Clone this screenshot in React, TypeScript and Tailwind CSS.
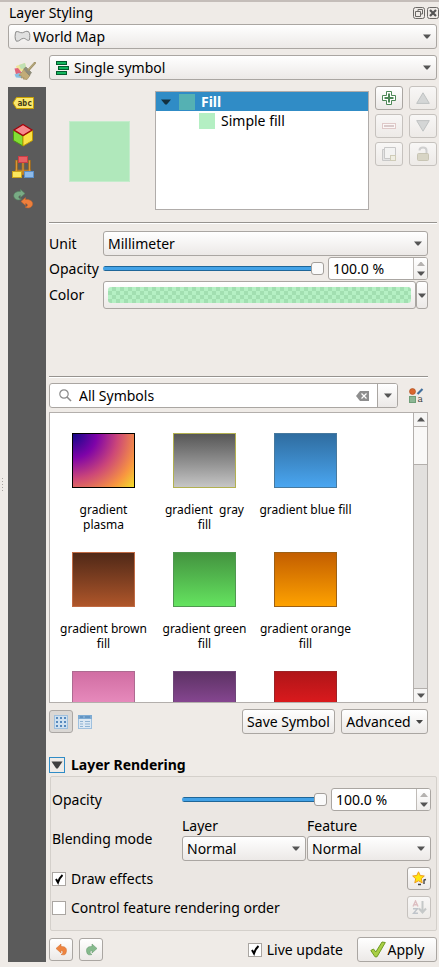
import type { ReactNode } from 'react';

const button =
  'flex items-center justify-center rounded-[3px] border border-[#aaa6a2] bg-linear-to-b from-white to-[#ece9e7]';
const fadedButton =
  'flex items-center justify-center rounded-[3px] border border-[#c6c2be] bg-linear-to-b from-[#f8f7f6] to-[#edeae7]';

function Down({ className = '' }: { className?: string }) {
  return (
    <svg viewBox="0 0 8 5" className={`h-[5px] w-2 shrink-0 ${className}`} aria-hidden="true">
      <path d="M0 0.5H8L4.6 4.5H3.4Z" fill="#555" />
    </svg>
  );
}

function Combo({
  label,
  value,
  icon,
  id,
  className = '',
}: {
  label: string;
  value: string;
  icon?: ReactNode;
  id?: string;
  className?: string;
}) {
  return (
    <div className={`relative min-w-0 ${className}`}>
      <select
        id={id}
        aria-label={label}
        className={`block h-[25px] w-full appearance-none rounded-[3px] border border-[#aaa6a2] bg-linear-to-b from-white to-[#ece9e7] pr-5 outline-none ${icon ? 'pl-6' : 'pl-1'}`}
      >
        <option>{value}</option>
      </select>
      {icon && <span className="pointer-events-none absolute inset-y-0 left-1.5 flex items-center">{icon}</span>}
      <span className="pointer-events-none absolute inset-y-0 right-1.5 flex items-center">
        <Down />
      </span>
    </div>
  );
}

function Slider({ label }: { label: string }) {
  return (
    <input
      type="range"
      aria-label={label}
      min={0}
      max={100}
      defaultValue={100}
      className="h-[13px] min-w-0 flex-1 appearance-none bg-transparent [&::-webkit-slider-runnable-track]:h-[5px] [&::-webkit-slider-runnable-track]:rounded-sm [&::-webkit-slider-runnable-track]:bg-[linear-gradient(#1f6698_1px,#43a2e6_1px,#43a2e6_4px,#1f6698_4px)] [&::-webkit-slider-thumb]:-mt-1 [&::-webkit-slider-thumb]:size-[13px] [&::-webkit-slider-thumb]:appearance-none [&::-webkit-slider-thumb]:rounded-[3px] [&::-webkit-slider-thumb]:border [&::-webkit-slider-thumb]:border-[#a39f9b] [&::-webkit-slider-thumb]:bg-[#fafafa]"
    />
  );
}

function Spin({ label }: { label: string }) {
  return (
    <div className="flex h-[23px] w-[100px] shrink-0 overflow-hidden rounded-[3px] border border-[#aaa6a2] bg-white">
      <input aria-label={label} defaultValue="100.0 %" className="w-0 min-w-0 flex-1 bg-transparent pl-1 outline-none" />
      <div className="flex w-[14px] flex-col border-l border-[#c0bcb8] bg-linear-to-b from-white to-[#efedeb]">
        <button aria-label="Increase" className="flex flex-1 items-end justify-center pb-[3px]">
          <svg viewBox="0 0 8 4" className="h-1 w-2 shrink-0">
            <path d="M0 4H8L4.6 0H3.4Z" fill="#b5b2b0" />
          </svg>
        </button>
        <button aria-label="Decrease" className="flex flex-1 items-start justify-center pt-0.5">
          <Down />
        </button>
      </div>
    </div>
  );
}

function Check({ label, checked }: { label: string; checked: boolean }) {
  return (
    <label className="flex items-center gap-[5px]">
      <span className="relative size-[14px]">
        <input
          type="checkbox"
          defaultChecked={checked}
          className="peer block size-[14px] appearance-none border border-[#aaa6a2] bg-white"
        />
        <svg
          viewBox="0 0 14 14"
          className="pointer-events-none absolute inset-0 hidden size-[14px] peer-checked:block"
          aria-hidden="true"
        >
          <path d="M4 7L6 10.5C7 7.500 8.500 4.800 10.500 3" fill="none" stroke="#000" strokeWidth="2" />
        </svg>
      </span>
      {label}
    </label>
  );
}

function Brush() {
  return (
    <svg viewBox="0 0 22 18" className="h-[18px] w-[22px]">
      <path d="M2 4L11 1L13 8L4 10Z" fill="#efe59a" />
      <path d="M5 3L11 1L12 6L7 7Z" fill="#bfe0b4" />
      <path d="M0.500 6.500L4 6L8 11L2 12.500Z" fill="#e0647a" />
      <path d="M0.500 12.500L5 11L9 16L2 15.500Z" fill="#86c0e4" />
      <path d="M5 13.500L9.500 8L16 13.500L13 17.500L9 17L10 15.500L7 16L8 14Z" fill="#c2ac78" stroke="#9c8758" strokeWidth="0.600" />
      <path d="M9.500 7L12 5L17.500 10.500L15.500 13.500Z" fill="#8f8d7c" stroke="#77745f" strokeWidth="0.500" />
      <path d="M14.500 8L20.800 1" stroke="#a2946a" strokeWidth="2.400" strokeLinecap="round" />
      <path d="M14.500 7.400L20.400 1" stroke="#c6b98c" strokeWidth="0.800" />
    </svg>
  );
}

function LabelTag() {
  return (
    <svg viewBox="0 0 22 22" className="size-[22px]">
      <path d="M1 11L4.500 5.500H21.500V16.500H4.500Z" fill="#fbe86f" stroke="#c9a100" />
      <text x="5.500" y="14" fontSize="8" fontWeight="700" fill="#3d3713" fontFamily="DejaVu Sans Mono, monospace">
        abc
      </text>
    </svg>
  );
}

function Cube() {
  return (
    <svg viewBox="0 0 22 24" className="h-6 w-[22px]">
      <path d="M1.500 7.500L11 13V23L1.500 17.500Z" fill="#84df35" stroke="#4d9a0e" />
      <path d="M20.500 7.500L11 13V23L20.500 17.500Z" fill="#fbe146" stroke="#c19b00" />
      <path d="M11 1.500L20 7L11 12.500L2 7Z" fill="#f68a8d" stroke="#a50008" strokeWidth="1.200" />
    </svg>
  );
}

function Diagram() {
  return (
    <svg viewBox="0 0 22 22" className="size-[22px]">
      <path d="M4.500 16V4M17.500 4V16M11 6V19" fill="none" stroke="#a66d1c" strokeWidth="2.600" />
      <path d="M3 14.500H19" stroke="#b87b25" strokeWidth="1.600" />
      <path d="M4.500 15V4.500M17.500 4.500V15M11 6V18.500" fill="none" stroke="#d79638" strokeWidth="1" />
      <rect x="6.500" y="0.500" width="9" height="6" fill="#e96064" stroke="#cb3e45" />
      <rect x="0.500" y="15.500" width="9" height="6" fill="#fce85e" stroke="#cda51a" />
      <rect x="12.500" y="15.500" width="9" height="6" fill="#8ebbea" stroke="#5b8fc9" />
    </svg>
  );
}

const hook = 'M1 5.500L6 1V3.500C10.500 3 13 6 10.500 11C9.500 12 8 12 6 11.500C8.500 10.500 8.500 7.500 6 7.500V10Z';

function History() {
  return (
    <svg viewBox="0 0 22 20" className="h-5 w-[22px]">
      <path
        d="M13 4.500L8.500 0.500V2.500C4 2 1 4.500 2 8C3.500 11.500 7 11.500 9.500 10C6.500 10 5.500 7 8.500 6.500V8.500Z"
        fill="#79ab85"
        stroke="#548961"
        strokeWidth="0.500"
      />
      <path
        d="M9 12.500L13.500 8.500V10.500C18 10 21.500 12.500 20.500 16C19 19.500 15.500 19.500 13 18C16 18 16.500 15 13.500 14.500V16.500Z"
        fill="#ed7f3c"
        stroke="#c76329"
        strokeWidth="0.500"
      />
    </svg>
  );
}

const tabs: [string, () => ReactNode][] = [
  ['Labels', LabelTag],
  ['3D view', Cube],
  ['Diagrams', Diagram],
  ['History', History],
];

type Swatch = { caption?: string; edge: string; fill: string };

const symbols: Swatch[] = [
  {
    caption: 'gradient\nplasma',
    edge: 'border-black',
    fill: 'bg-[radial-gradient(circle_at_0_0,#0d0887_0%,#7e03a8_30%,#cc4778_55%,#f89540_80%,#f0f921_105%)]',
  },
  { caption: 'gradient  gray\nfill', edge: 'border-[#b2b050]', fill: 'bg-linear-to-b from-[#555] to-[#c8c8c8]' },
  { caption: 'gradient blue fill', edge: 'border-[#47799e]', fill: 'bg-linear-to-b from-[#2f6c9f] to-[#4aa7f2]' },
  { caption: 'gradient brown\nfill', edge: 'border-[#c06a43]', fill: 'bg-linear-to-b from-[#4f2817] to-[#b1572a]' },
  { caption: 'gradient green\nfill', edge: 'border-[#4f9850]', fill: 'bg-linear-to-b from-[#43923f] to-[#65e560]' },
  { caption: 'gradient orange\nfill', edge: 'border-[#9d6014]', fill: 'bg-linear-to-b from-[#c25d00] to-[#ffa300]' },
  { edge: 'border-[#ad6b91]', fill: 'bg-linear-to-b from-[#d06da2] to-[#f79fcf]' },
  { edge: 'border-[#6e4678]', fill: 'bg-linear-to-b from-[#5c3263] to-[#a656b4]' },
  { edge: 'border-[#9c2226]', fill: 'bg-linear-to-b from-[#af1518] to-[#fb1d20]' },
];

function Rule() {
  return <div className="h-0.5 border-t border-[#96938f] bg-white" />;
}

function SymbolTree() {
  return (
    <section className="flex h-[142px] pt-1.5">
      <div className="flex min-w-0 flex-1 gap-1.5">
        <div className="flex w-[101px] justify-center pt-[35px]">
          <div className="size-[61px] border border-[#c4eccc] bg-[#b0e8bb]" />
        </div>
        <ul role="tree" className="mt-[5px] -ml-px h-[119px] min-w-0 flex-1 border border-[#b0acaa] bg-white">
          <li role="treeitem" aria-selected="true" className="flex h-[19px] items-center bg-[#308cc6] pl-[5px] font-bold text-white">
            <svg viewBox="0 0 10 6" className="h-1.5 w-2.5">
              <path d="M0 0.500H10L5.800 5.500H4.200Z" fill="#13303f" />
            </svg>
            <span className="mr-1.5 ml-2 size-4 bg-[#55b1b3]" />
            Fill
          </li>
          <li role="treeitem" className="flex h-5 items-center pl-[43px]">
            <span className="mr-1.5 size-4 bg-[#b4efc3]" />
            Simple fill
          </li>
        </ul>
      </div>
      <div className="ml-1.5 grid w-[62px] auto-rows-[24px] grid-cols-2 gap-x-1.5 gap-y-1">
        <button aria-label="Add symbol layer" className={button}>
          <svg viewBox="0 0 14 14" className="size-[14px]">
            <path d="M4.500 0.500H9.500V4.500H13.500V9.500H9.500V13.500H4.500V9.500H0.500V4.500H4.500Z" fill="#fff" stroke="#4d8757" />
            <path d="M7 2.500V11.500M2.500 7H11.500" stroke="#4d8757" strokeWidth="2" />
          </svg>
        </button>
        <button aria-label="Move up" className={fadedButton}>
          <svg viewBox="0 0 14 12" className="h-3 w-[14px]">
            <path d="M7 0.800L13.300 11.400H0.700Z" fill="#d4d6d6" stroke="#bfc2c2" />
          </svg>
        </button>
        <button aria-label="Remove symbol layer" className={fadedButton}>
          <svg viewBox="0 0 14 6" className="h-1.5 w-[14px]">
            <rect x="0.500" y="0.500" width="13" height="5" fill="#fbf7f6" stroke="#dfc9c8" />
            <path d="M2 3H12" stroke="#d9caca" strokeWidth="2" />
          </svg>
        </button>
        <button aria-label="Move down" className={fadedButton}>
          <svg viewBox="0 0 14 12" className="h-3 w-[14px]">
            <path d="M0.700 0.600H13.300L7 11.200Z" fill="#d4d6d6" stroke="#bfc2c2" />
          </svg>
        </button>
        <button aria-label="Duplicate" className={fadedButton}>
          <svg viewBox="0 0 14 14" className="size-[14px]">
            <path d="M2.500 2.500H0.500V13.500H9.500V11.500" fill="#e4e4e4" stroke="#c8c8c8" />
            <path d="M2.500 0.500H13.500V11.500H2.500Z" fill="#f3f3f2" stroke="#c8c8c8" />
            <rect x="8.500" y="8.500" width="5" height="5" fill="#efeee2" stroke="#cfccb8" />
          </svg>
        </button>
        <button aria-label="Lock colour" className={fadedButton}>
          <svg viewBox="0 0 12 16" className="h-4 w-3">
            <path d="M2.500 4.500C2.500 0.500 9.500 0.500 9.500 4.500V8" fill="none" stroke="#cfcfcf" strokeWidth="2" />
            <rect x="0.500" y="7.500" width="11" height="7" rx="1" fill="#d8d5c5" stroke="#c8c5b4" />
          </svg>
        </button>
      </div>
    </section>
  );
}

function SymbolList() {
  return (
    <div className="flex h-[291px] border border-[#b3afac] bg-white">
      <ul className="grid min-w-0 flex-1 auto-rows-[119px] grid-cols-[repeat(3,101px)] overflow-hidden pt-5 pl-[3px]">
        {symbols.map(({ caption, edge, fill }) => (
          <li key={fill} className="flex flex-col items-center gap-[14px]">
            <div className={`h-[55px] w-[63px] shrink-0 border bg-origin-border ${edge} ${fill}`} />
            {caption && <span className="text-center text-[12px] leading-[15px] whitespace-pre">{caption}</span>}
          </li>
        ))}
      </ul>
      <div className="flex w-[14px] flex-col border-l border-[#b3afac] bg-[#e2e0de]">
        <button aria-label="Scroll up" className="flex h-[14px] items-center justify-center border-b border-[#b3afac] bg-[#f6f5f4]">
          <svg viewBox="0 0 8 5" className="h-[5px] w-2">
            <path d="M0 4.500H8L4.600 0.500H3.400Z" fill="#555" />
          </svg>
        </button>
        <div className="h-[38px] border-b border-[#b3afac] bg-[#f9f8f7]" />
        <div className="flex-1" />
        <button aria-label="Scroll down" className="flex h-[14px] items-center justify-center border-t border-[#b3afac] bg-[#f6f5f4]">
          <Down />
        </button>
      </div>
    </div>
  );
}

export default function App() {
  return (
    <div className="flex border-t-2 border-[#c4bdb9] bg-[#efebe7] font-['Noto_Sans',sans-serif] text-[14px] leading-[20px] text-black">
      <div className="flex w-2 shrink-0 flex-col items-start justify-center gap-0.5 pl-0.5">
        {[0, 1, 2, 3, 4].map((n) => (
          <span key={n} className="h-px w-px bg-[#a9a5a1]" />
        ))}
      </div>
      <div className="flex min-w-0 flex-1 flex-col pb-[5px]">
        <header className="flex h-[22px] items-center justify-between">
          <h1 className="pl-px">Layer Styling</h1>
          <div className="flex gap-0.5">
            <button aria-label="Float panel">
              <svg viewBox="0 0 12 12" className="size-3">
                <rect x="0.500" y="0.500" width="11" height="11" rx="2" fill="none" stroke="#6b6966" />
                <path d="M5 4.500V2.500H9.500V7H7.500M2.500 4.500H7.500V9.500H2.500Z" fill="none" stroke="#6b6966" />
              </svg>
            </button>
            <button aria-label="Close panel">
              <svg viewBox="0 0 12 12" className="size-3">
                <rect x="0.500" y="0.500" width="11" height="11" rx="2" fill="none" stroke="#6b6966" />
                <path d="M3 3L9 9M9 3L3 9" stroke="#555" strokeWidth="2.200" />
              </svg>
            </button>
          </div>
        </header>
        <Combo
          label="Layer"
          value="World Map"
          className="mr-0.5"
          icon={
            <svg viewBox="0 0 18 13" className="h-[13px] w-[17px]">
              <path
                d="M2 1.500C5 0.500 6 3 9 2.500C11 2 13 0 15.500 1.500C17.500 4 16.500 7 16.500 10C14 12 12.500 8 10 8.500C7 8.500 6 12 2.500 11.500C0.500 9 1 4 2 1.500Z"
                fill="#e0e0e0"
                stroke="#858585"
              />
            </svg>
          }
        />
        <div className="mt-1.5 flex gap-[3px] pr-0.5">
          <nav className="flex w-[38px] shrink-0 flex-col">
            <button aria-label="Symbology" className="flex h-8 items-center pl-1.5">
              <Brush />
            </button>
            <div className="flex flex-1 flex-col bg-[#5b5b5b]">
              {tabs.map(([name, Icon]) => (
                <button key={name} aria-label={name} className="flex h-8 items-center pl-1">
                  <Icon />
                </button>
              ))}
            </div>
          </nav>
          <main className="flex min-w-0 flex-1 flex-col">
            <Combo
              label="Renderer"
              value="Single symbol"
              icon={
                <svg viewBox="0 0 14 14" className="size-[14px]">
                  <g fill="#14b55e" stroke="#065a2e">
                    <rect x="1.500" y="0.500" width="10" height="3" />
                    <rect x="3.500" y="5.500" width="10" height="3" />
                    <rect x="1.500" y="10.500" width="10" height="3" />
                  </g>
                </svg>
              }
            />
            <SymbolTree />
            <Rule />
            <section className="flex h-[152px] flex-col pt-[7px] pr-[9px]">
              <div className="flex items-center">
                <label htmlFor="unit" className="w-[54px]">Unit</label>
                <Combo id="unit" label="Unit" value="Millimeter" className="flex-1" />
              </div>
              <div className="mt-px flex items-center">
                <span className="w-[54px]">Opacity</span>
                <Slider label="Opacity" />
                <div className="w-1" />
                <Spin label="Opacity value" />
              </div>
              <div className="mt-px flex items-center">
                <span className="w-[54px]">Color</span>
                <button aria-label="Color" className="flex h-7 min-w-0 flex-1 items-center rounded-[3px] border border-[#aaa6a2] bg-linear-to-b from-white to-[#ece9e7] px-1">
                  <span className="h-4 flex-1 rounded-[3px] bg-[repeating-conic-gradient(#a2dfb1_0_25%,#b5f0c4_0_50%)] bg-size-[8px_8px]" />
                </button>
                <button aria-label="Color menu" className={`${button} h-7 w-3`}>
                  <Down />
                </button>
              </div>
            </section>
            <div className="pr-[9px]">
              <Rule />
              <div className="mt-[5px] mb-1 flex h-[25px] items-center">
                <div className="flex h-full min-w-0 flex-1 items-center rounded-[3px] border border-[#aaa6a2] bg-white">
                  <svg viewBox="0 0 13 13" className="ml-[9px] h-[13px] w-[13px] shrink-0" fill="none" stroke="#8b8b8b">
                    <circle cx="5" cy="5" r="4.200" strokeWidth="1.200" />
                    <path d="M8 8L12 12" strokeWidth="1.600" />
                  </svg>
                  <input aria-label="Symbol filter" defaultValue="All Symbols" className="ml-[7px] w-0 min-w-0 flex-1 bg-transparent outline-none" />
                  <button aria-label="Clear">
                    <svg viewBox="0 0 13 10" className="mr-2 h-2.5 w-[13px]">
                      <path d="M4 0H13V10H4L0 5Z" fill="#8e8e8e" />
                      <path d="M5.500 2.500L10.500 7.500M10.500 2.500L5.500 7.500" stroke="#fff" strokeWidth="1.200" />
                    </svg>
                  </button>
                  <button aria-label="Symbol groups" className="flex h-full w-5 items-center justify-center rounded-r-[2px] border-l border-[#aaa6a2] bg-linear-to-b from-white to-[#ece9e7]">
                    <Down />
                  </button>
                </div>
                <button aria-label="Style manager" className="mr-1 ml-[11px]">
                  <svg viewBox="0 0 15 15" className="size-[15px]">
                    <circle cx="3.500" cy="3.500" r="3" fill="#d9672e" stroke="#a94a1a" strokeWidth="0.600" />
                    <path d="M8.500 6L13.500 1" stroke="#416f9c" strokeWidth="2.200" />
                    <rect x="0.500" y="8.500" width="6" height="6" fill="#8db795" stroke="#6f9f79" />
                    <text x="8.500" y="14" fontSize="9" fill="#444" fontFamily="DejaVu Serif, serif">
                      a
                    </text>
                  </svg>
                </button>
              </div>
              <SymbolList />
              <div className="mt-1.5 flex h-[25px] items-center">
                <button aria-label="Icon view" className="flex h-[23px] w-6 items-center justify-center rounded-[3px] border border-[#aba7a4] bg-[#dad7d4]">
                  <svg viewBox="0 0 14 14" className="size-[14px]">
                    <rect x="0.500" y="0.500" width="13" height="13" fill="#cfe0ef" stroke="#9fc0de" />
                    <path d="M2 3H12M2 7H12M2 11H12" stroke="#5689bd" strokeWidth="2" strokeDasharray="2 2" />
                  </svg>
                </button>
                <button aria-label="List view" className="ml-[5px]">
                  <svg viewBox="0 0 14 14" className="size-[14px]">
                    <rect x="0.500" y="0.500" width="13" height="13" fill="#dce8f3" stroke="#9fc0de" />
                    <path d="M0 2H14" stroke="#7eabd3" strokeWidth="4" />
                    <path d="M2 2H5M7 2H12" stroke="#4b7fb3" />
                    <path d="M2 6.500H5M7 6.500H12M2 9H5M7 9H12M2 11.500H5M7 11.500H12" stroke="#8fb3d3" />
                  </svg>
                </button>
                <button className={`${button} ml-auto h-[25px] w-[93px] whitespace-nowrap`}>Save Symbol</button>
                <button className={`${button} ml-1.5 h-[25px] w-[87px] gap-[5px]`}>
                  Advanced
                  <svg viewBox="0 0 7 4" className="h-1 w-[7px] shrink-0">
                    <path d="M0 0H7L4 3.500H3Z" fill="#444" />
                  </svg>
                </button>
              </div>
            </div>
            <h2 className="mt-[21px] flex h-5 items-center gap-1.5 font-bold">
              <button aria-label="Collapse Layer Rendering" className="flex size-4 items-center justify-center border border-[#308cc6]">
                <svg viewBox="0 0 12 8" className="h-2 w-3">
                  <path d="M0.500 0.500H11.500L6.800 7.500H5.200Z" fill="#3f3f3f" />
                </svg>
              </button>
              Layer Rendering
            </h2>
            <section className="mt-px ml-px flex h-[155px] flex-col rounded-[2px] border border-[#d4d0cb] bg-[#ebe7e3] pt-[11px] pr-[5px] pl-px">
              <div className="flex items-center">
                <span className="w-[130px]">Opacity</span>
                <Slider label="Layer opacity" />
                <div className="w-1" />
                <Spin label="Layer opacity value" />
              </div>
              <div className="mt-[5px] flex items-center">
                <span className="w-[130px] shrink-0">Blending mode</span>
                <div className="grid min-w-0 flex-1 grid-cols-2 gap-x-px">
                  <label htmlFor="blend-layer">Layer</label>
                  <label htmlFor="blend-feature">Feature</label>
                  <Combo id="blend-layer" label="Layer" value="Normal" />
                  <Combo id="blend-feature" label="Feature" value="Normal" />
                </div>
              </div>
              <div className="mt-1.5 flex items-center justify-between">
                <Check label="Draw effects" checked />
                <button aria-label="Customize effects" className={`${button} h-[23px] w-6`}>
                  <svg viewBox="0 0 15 15" className="size-[15px]">
                    <path d="M6 13.500H9M12 13V8.500M12 9L14 8.500" stroke="#444" strokeWidth="1.400" />
                    <path
                      d="M6.500 0.800L8.200 4.500L12.300 5L9.300 7.700L10.200 11.800L6.500 9.800L2.800 11.800L3.700 7.700L0.700 5L4.800 4.500Z"
                      fill="#ffe70f"
                      stroke="#ef9c1c"
                    />
                  </svg>
                </button>
              </div>
              <div className="mt-1.5 flex items-center justify-between">
                <Check label="Control feature rendering order" checked={false} />
                <button aria-label="Define order" className={`${fadedButton} h-[23px] w-6`}>
                  <svg viewBox="0 0 15 15" className="size-[15px]" fill="none">
                    <path d="M1 6.500L3.500 1L6 6.500M2 4.800H5" stroke="#ddbfc2" strokeWidth="1.400" />
                    <path d="M1 8.700H5.500L1.500 13.300H6" stroke="#bfc4ca" strokeWidth="1.400" />
                    <path d="M10.500 1V12M7 8.500L10.500 12.500L14 8.500" stroke="#c5c8c8" strokeWidth="2" />
                  </svg>
                </button>
              </div>
            </section>
            <footer className="mt-1.5 flex h-[25px] items-center">
              <button aria-label="Undo" className={`${button} h-[23px] w-6`}>
                <svg viewBox="0 0 13 13" className="size-[13px]">
                  <path d={hook} fill="#ee8440" stroke="#cf6a2b" strokeWidth="0.500" />
                </svg>
              </button>
              <button aria-label="Redo" className={`${button} ml-1.5 h-[23px] w-6`}>
                <svg viewBox="0 0 13 13" className="size-[13px] -scale-x-100">
                  <path d={hook} fill="#86ba8d" stroke="#5f9568" strokeWidth="0.500" />
                </svg>
              </button>
              <div className="flex-1" />
              <Check label="Live update" checked />
              <button className={`${button} ml-[14px] h-[25px] w-20 gap-0.5`}>
                <svg viewBox="0 0 16 17" className="h-[17px] w-4">
                  <path d="M0.800 9.500L3.500 8L5.800 11L12 1L15.300 1.500L7 15.800H5Z" fill="#a9cf45" stroke="#6e9a22" />
                </svg>
                Apply
              </button>
            </footer>
          </main>
        </div>
      </div>
    </div>
  );
}
